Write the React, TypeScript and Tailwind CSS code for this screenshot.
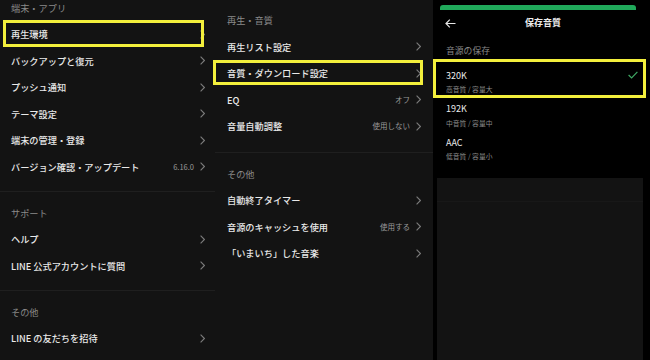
import React from "react";

const FONT = { fontFamily: '"Noto Sans CJK JP", "Noto Sans", sans-serif' };

function Chevron() {
  return (
    <svg width="5" height="9" viewBox="0 0 5 9" className="shrink-0">
      <polyline points="0.6,0.6 4.4,4.5 0.6,8.4" fill="none" stroke="#7c7c7c" strokeWidth="1.1" />
    </svg>
  );
}

function Row({ label, value, h }: { label: string; value?: string; h: string }) {
  return (
    <div className={`flex items-center justify-between ${h}`}>
      <span className="text-[9.2px] leading-[12px] font-medium text-[#e9e9e9] whitespace-nowrap">{label}</span>
      <div className="flex items-center gap-[6px]">
        {value && <span className="text-[7.5px] leading-[10px] text-[#9a9a9a] whitespace-nowrap">{value}</span>}
        <Chevron />
      </div>
    </div>
  );
}

function Header({ label, cls }: { label: string; cls: string }) {
  return (
    <div className={`flex items-end ${cls}`}>
      <span className="text-[9.2px] leading-[12px] text-[#8a8a8a] whitespace-nowrap">{label}</span>
    </div>
  );
}

function Sep() {
  return <div className="h-px bg-[#1f1f1f]" />;
}

function Quality({ name, sub, checked }: { name: string; sub: string; checked?: boolean }) {
  return (
    <div className="flex h-[33.7px] items-center justify-between pl-[13px] pr-[5px]">
      <div className="flex flex-col gap-[3.5px]">
        <span className="text-[9px] leading-[12px] text-[#ececec]">{name}</span>
        <span className="text-[6.8px] leading-[9px] text-[#8a8a8a] whitespace-nowrap">{sub}</span>
      </div>
      {checked && (
        <svg width="10" height="8" viewBox="0 0 10 8" className="mb-[14px]">
          <path d="M0.6 4 L3.6 7 L9.4 0.8" fill="none" stroke="#3fa864" strokeWidth="1.2" />
        </svg>
      )}
    </div>
  );
}

export default function App() {
  return (
    <div className="relative flex h-[360px] w-[650px] overflow-hidden bg-black" style={FONT}>
      {/* Panel 1 */}
      <div className="flex w-[215px] shrink-0 flex-col bg-[#131313]">
        <div className="pl-[11px] pr-[10px] pb-[11px]">
          <Header label="端末・アプリ" cls="h-[21px] pb-[7px]" />
          <Row h="h-[26.5px]" label="再生環境" />
          <Row h="h-[26.5px]" label="バックアップと復元" />
          <Row h="h-[26.5px]" label="プッシュ通知" />
          <Row h="h-[26.5px]" label="テーマ設定" />
          <Row h="h-[26.5px]" label="端末の管理・登録" />
          <Row h="h-[26.5px]" label="バージョン確認・アップデート" value="6.16.0" />
        </div>
        <Sep />
        <div className="pl-[11px] pr-[10px] pb-[11px]">
          <Header label="サポート" cls="h-[34px] pb-[7.5px]" />
          <Row h="h-[26.5px]" label="ヘルプ" />
          <Row h="h-[26.5px]" label="LINE 公式アカウントに質問" />
        </div>
        <Sep />
        <div className="pl-[11px] pr-[10px]">
          <Header label="その他" cls="h-[34px] pb-[7.5px]" />
          <Row h="h-[26.5px]" label="LINE の友だちを招待" />
        </div>
      </div>

      {/* Panel 2 */}
      <div className="flex w-[218px] shrink-0 flex-col bg-[#131313]">
        <div className="pl-[12px] pr-[12px] pb-[12.6px]">
          <Header label="再生・音質" cls="h-[33.5px] pb-[7.5px]" />
          <Row h="h-[26.5px]" label="再生リスト設定" />
          <Row h="h-[26.5px]" label="音質・ダウンロード設定" />
          <Row h="h-[26.5px]" label="EQ" value="オフ" />
          <Row h="h-[26.5px]" label="音量自動調整" value="使用しない" />
        </div>
        <Sep />
        <div className="pl-[12px] pr-[12px]">
          <Header label="その他" cls="h-[34px] pb-[7.5px]" />
          <Row h="h-[26.5px]" label="自動終了タイマー" />
          <Row h="h-[26.5px]" label="音源のキャッシュを使用" value="使用する" />
          <Row h="h-[26.5px]" label="「いまいち」した音楽" />
        </div>
      </div>

      {/* Panel 3 */}
      <div className="flex w-[210px] shrink-0 flex-col bg-black">
        <div className="mx-[7px] mt-[5px] h-[5px] rounded-t-[3px] bg-[#20a95a]" />
        <div className="flex h-[26px] items-center">
          <div className="flex w-[30px] items-center pl-[12px]">
            <svg width="11" height="9" viewBox="0 0 11 9">
              <path d="M10.5 4.5 H1 M4.8 0.7 L1 4.5 L4.8 8.3" fill="none" stroke="#e6e6e6" strokeWidth="1.2" />
            </svg>
          </div>
          <div className="flex flex-1 justify-center">
            <span className="text-[9px] leading-[12px] font-bold text-[#ececec]">保存音質</span>
          </div>
          <div className="w-[20px]" />
        </div>
        <div className="flex h-[29px] items-end pb-[8px] pl-[13px]">
          <span className="text-[8.8px] leading-[12px] text-[#8a8a8a]">音源の保存</span>
        </div>
        <Quality name="320K" sub="高音質 / 容量大" checked />
        <Quality name="192K" sub="中音質 / 容量中" />
        <Quality name="AAC" sub="低音質 / 容量小" />
        <div className="h-[12px]" />
        <div className="ml-[4px] flex-1 bg-[#131313]">
          <div className="h-[24px] border-b border-[#181818]" />
        </div>
      </div>
      <div className="flex-1 bg-black" />

      {/* Yellow annotation boxes */}
      <div className="pointer-events-none absolute left-[3px] top-[20px] h-[27px] w-[201px] border-[3px] border-[#f3ef3c]" />
      <div className="pointer-events-none absolute left-[213px] top-[60px] h-[25px] w-[210px] border-[3px] border-[#f3ef3c]" />
      <div className="pointer-events-none absolute left-[433px] top-[59px] h-[39px] w-[213px] border-[3px] border-[#f3ef3c]" />
    </div>
  );
}
